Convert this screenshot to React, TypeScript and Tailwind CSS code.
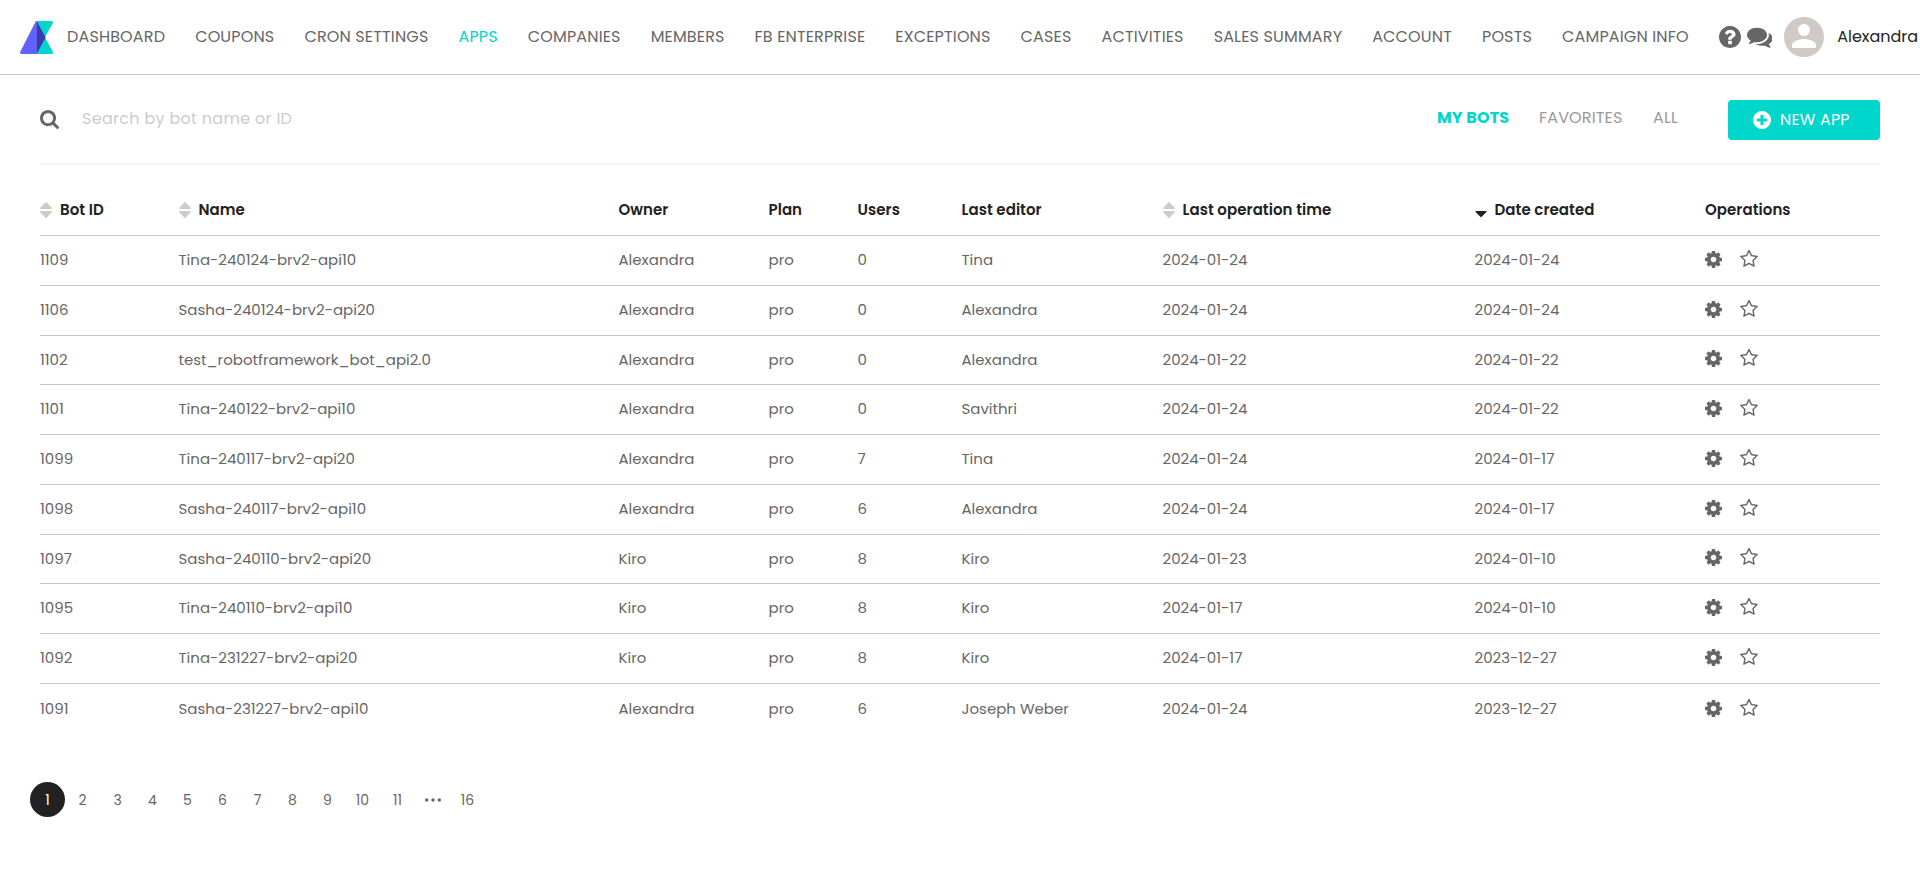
import type { ReactNode } from "react";

const GEAR =
  "M1024 896q0-106-75-181t-181-75-181 75-75 181 75 181 181 75 181-75 75-181zm512-109v222q0 12-8 23t-20 13l-185 28q-19 54-39 91 35 50 107 138 10 12 10 25t-9 23q-27 37-99 108t-94 71q-12 0-26-9l-138-108q-44 23-91 38-16 136-29 186-7 28-36 28h-222q-14 0-24.5-8.5t-11.5-21.5l-28-184q-49-16-90-37l-141 107q-10 9-25 9-14 0-25-11-126-114-165-168-7-10-7-23 0-12 8-23 15-21 51-66.5t54-70.5q-27-50-41-99l-183-27q-13-2-21-12.5t-8-23.5v-222q0-12 8-23t19-13l186-28q14-46 39-92-40-57-107-138-10-12-10-24 0-10 9-23 26-36 98.5-107.500t94.500-71.500q13 0 26 10l138 107q44-23 91-38 16-136 29-186 7-28 36-28h222q14 0 24.500 8.500t11.500 21.500l28 184q49 16 90 37l142-107q9-9 24-9 13 0 25 10 129 119 165 170 7 8 7 22 0 12-8 23-15 21-51 66.500t-54 70.500q26 50 41 98l183 28q13 2 21 12.500t8 23.500z";
const STAR =
  "M1201 1004l306-297-422-62-189-382-189 382-422 62 306 297-73 421 378-199 377 199zm527-357q0 22-26 48l-363 354 86 500q1 7 1 20 0 50-41 50-19 0-40-12l-449-236-449 236q-22 12-40 12-21 0-31.500-14.500t-10.500-35.500q0-6 2-20l86-500-364-354q-25-27-25-48 0-37 56-46l502-73 225-455q19-41 49-41t49 41l225 455 502 73q56 9 56 46z";
const SEARCH =
  "M1216 832q0-185-131.500-316.500t-316.500-131.500-316.500 131.500-131.500 316.500 131.500 316.500 316.500 131.500 316.500-131.500 131.500-316.500zm512 832q0 52-38 90t-90 38q-54 0-90-38l-343-342q-179 124-399 124-143 0-273.500-55.500t-225-150-150-225-55.500-273.500 55.500-273.500 150-225 225-150 273.500-55.500 273.500 55.500 225 150 150 225 55.500 273.500q0 220-124 399l343 343q37 37 37 90z";
const DISC =
  "q0 209-103 385.500t-279.500 279.500-385.500 103-385.500-103-279.500-279.500-103-385.500 103-385.500 279.500-279.500 385.500-103 385.500 103 279.500 279.500 103 385.500z";
const PLUS =
  "M1344 960v-128q0-26-19-45t-45-19h-256v-256q0-26-19-45t-45-19h-128q-26 0-45 19t-19 45v256h-256q-26 0-45 19t-19 45v128q0 26 19 45t45 19h256v256q0 26 19 45t45 19h128q26 0 45-19t19-45v-256h256q26 0 45-19t19-45zm320-64" + DISC;
const QUESTION =
  "M1024 1376v-192q0-14-9-23t-23-9h-192q-14 0-23 9t-9 23v192q0 14 9 23t23 9h192q14 0 23-9t9-23zm256-672q0-88-55.500-163t-138.500-116-170-41q-243 0-371 213-15 24 8 42l132 100q7 6 19 6 16 0 25-12 53-68 86-92 34-24 86-24 48 0 85.500 26t37.500 59q0 38-20 61t-68 45q-63 28-115.500 86.500t-52.500 125.500v36q0 14 9 23t23 9h192q14 0 23-9t9-23q0-19 21.500-49.500t54.500-49.500q32-18 49-28.500t46-35 44.500-48 28-60.500 12.500-81zm384 192" + DISC;
const COMMENTS =
  "M1408 768q0 139-94 257t-256.500 186.500-353.500 68.500q-86 0-176-16-124 88-278 128-36 9-86 16h-3q-11 0-20.500-8t-11.500-21q-1-3-1-6.500t.5-6.500 2-6l2.500-5 3.500-5.500 4-5 4.500-5 4-4.500q5-6 23-25t26-29.500 22.500-29 25-38.500 20.500-44q-124-72-195-177t-71-224q0-139 94-257t256.500-186.500 353.500-68.500 353.500 68.500 256.500 186.500 94 257zm384 256q0 120-71 224.500t-195 176.500q10 24 20.500 44t25 38.500 22.500 29 26 29.500 23 25q1 1 4 4.500t4.500 5 4 5 3.500 5.500l2.500 5 2 6 .5 6.500-1 6.500q-3 14-13 22t-22 7q-50-7-86-16-154-40-278-128-90 16-176 16-271 0-472-132 58 4 88 4 161 0 309-45t264-129q125-92 192-212t67-254q0-77-23-152 129 71 204 178t75 230z";

function Icon({ d, className, viewBox = "0 0 1792 1792" }: { d: string; className: string; viewBox?: string }) {
  return (
    <svg viewBox={viewBox} fill="currentColor" className={`shrink-0 ${className}`} aria-hidden="true">
      <path d={d} />
    </svg>
  );
}

function Logo() {
  return (
    <svg viewBox="0 0 33 33" className="h-[33px] w-[33px] shrink-0" aria-hidden="true">
      <path d="M16.500 0H31.200Q33.800 0 32.700 2.200L25 16.200L32.700 30.600Q33.800 33 31.200 33H16.500z" fill="#00d6cc" />
      <path d="M16.800 0V33H2Q-.8 33 .4 30.400L15.300 1.200Q15.900 0 16.800 0z" fill="#6260ff" />
      <path d="M16.700 0L25.600 16.300L16.700 33z" fill="#3e38b0" />
    </svg>
  );
}

const NAV = [
  "DASHBOARD",
  "COUPONS",
  "CRON SETTINGS",
  "APPS",
  "COMPANIES",
  "MEMBERS",
  "FB ENTERPRISE",
  "EXCEPTIONS",
  "CASES",
  "ACTIVITIES",
  "SALES SUMMARY",
  "ACCOUNT",
  "POSTS",
  "CAMPAIGN INFO",
];

type Bot = { id: string; name: string; owner: string; users: number; editor: string; operated: string; created: string };

const BOTS: Bot[] = [
  { id: "1109", name: "Tina-240124-brv2-api10", owner: "Alexandra", users: 0, editor: "Tina", operated: "2024-01-24", created: "2024-01-24" },
  { id: "1106", name: "Sasha-240124-brv2-api20", owner: "Alexandra", users: 0, editor: "Alexandra", operated: "2024-01-24", created: "2024-01-24" },
  { id: "1102", name: "test_robotframework_bot_api2.0", owner: "Alexandra", users: 0, editor: "Alexandra", operated: "2024-01-22", created: "2024-01-22" },
  { id: "1101", name: "Tina-240122-brv2-api10", owner: "Alexandra", users: 0, editor: "Savithri", operated: "2024-01-24", created: "2024-01-22" },
  { id: "1099", name: "Tina-240117-brv2-api20", owner: "Alexandra", users: 7, editor: "Tina", operated: "2024-01-24", created: "2024-01-17" },
  { id: "1098", name: "Sasha-240117-brv2-api10", owner: "Alexandra", users: 6, editor: "Alexandra", operated: "2024-01-24", created: "2024-01-17" },
  { id: "1097", name: "Sasha-240110-brv2-api20", owner: "Kiro", users: 8, editor: "Kiro", operated: "2024-01-23", created: "2024-01-10" },
  { id: "1095", name: "Tina-240110-brv2-api10", owner: "Kiro", users: 8, editor: "Kiro", operated: "2024-01-17", created: "2024-01-10" },
  { id: "1092", name: "Tina-231227-brv2-api20", owner: "Kiro", users: 8, editor: "Kiro", operated: "2024-01-17", created: "2023-12-27" },
  { id: "1091", name: "Sasha-231227-brv2-api10", owner: "Alexandra", users: 6, editor: "Joseph Weber", operated: "2024-01-24", created: "2023-12-27" },
];

const COLUMNS = "grid grid-cols-[138.5px_440px_150px_89px_104px_201px_312px_230.5px_1fr] items-center border-[#cdc8c4]";

function SortIcon({ active = false }: { active?: boolean }) {
  return (
    <svg viewBox="0 0 12 16" className="h-4 w-3 shrink-0" aria-hidden="true">
      {!active && <path d="M5.300 .4Q6 -.2 6.700 .4L11.700 5.800Q12.200 6.800 11.200 7H.8Q-.2 6.800 .3 5.800z" fill="#d0c9c4" />}
      {active ? (
        <path d="M.8 9H11.200Q12 9.200 11.400 10L6.700 14.800Q6 15.500 5.300 14.800L.6 10Q0 9.200 .8 9z" fill="#222" />
      ) : (
        <path d="M5.300 15.600Q6 16.200 6.700 15.600L11.700 10.200Q12.200 9.200 11.200 9H.8Q-.2 9.200 .3 10.200z" fill="#d0c9c4" />
      )}
    </svg>
  );
}

function Heading({ children, sort }: { children: ReactNode; sort?: "none" | "desc" }) {
  return (
    <div className="flex items-center gap-2">
      {sort && <SortIcon active={sort === "desc"} />}
      <span className="whitespace-nowrap">{children}</span>
    </div>
  );
}

const PAGES = ["1", "2", "3", "4", "5", "6", "7", "8", "9", "10", "11", "…", "16"];

export default function App() {
  return (
    <div className="min-h-screen w-full overflow-hidden bg-white font-['Poppins','Inter',sans-serif] text-[#666] [font-feature-settings:'cv11']">
      <header className="flex h-[75px] items-center overflow-hidden border-b border-[#cdc8c4] pl-5">
        <Logo />
        <nav className="ml-[14px] flex shrink-0 gap-[30px] text-base tracking-[0.15px] whitespace-nowrap">
          {NAV.map((label) => (
            <a key={label} className={`shrink-0 ${label === "APPS" ? "text-[#00d6cc]" : ""}`}>
              {label}
            </a>
          ))}
        </nav>
        <div className="ml-[30.5px] flex shrink-0 items-center pb-px">
          <Icon d={QUESTION} viewBox="128 128 1536 1536" className="h-[22px] w-[22px]" />
          <Icon d={COMMENTS} className="ml-[5.5px] h-[25.5px] w-[25.5px]" />
          <div className="mt-px ml-3 flex h-10 w-10 items-center justify-center rounded-full bg-[#d0c9c4] pb-0.5 text-white">
            <Icon
              viewBox="0 0 24 24"
              d="M12 12c2.210 0 4-1.790 4-4s-1.790-4-4-4-4 1.790-4 4 1.790 4 4 4zm0 2c-2.670 0-8 1.340-8 4v2h16v-2c0-2.660-5.330-4-8-4z"
              className="h-9 w-9"
            />
          </div>
          <span className="ml-[13px] text-base text-[#222]">Alexandra</span>
        </div>
      </header>

      <main className="mx-10">
        <section className="flex h-[90px] items-start border-b-2 border-[#f5f5f5] pt-[25px]">
          <div className="flex h-10 flex-1 items-center">
            <Icon d={SEARCH} viewBox="64 128 1664 1664" className="-mt-px h-[19px] w-[19px]" />
            <input
              className="ml-[23px] w-96 bg-transparent pb-0.5 text-base tracking-[0.3px] outline-none placeholder:text-[#ccc]"
              placeholder="Search by bot name or ID"
            />
          </div>
          <div className="flex h-[35px] items-center text-base tracking-[0.15px] text-[#999]">
            <span className="w-[102px] font-bold text-[#00d6cc]">MY BOTS</span>
            <span className="w-[114px]">FAVORITES</span>
            <span className="w-[75px]">ALL</span>
          </div>
          <button className="flex h-10 w-[152px] items-center rounded bg-[#00d6cc] pl-[25px] text-base tracking-[0.15px] text-white">
            <Icon d={PLUS} viewBox="128 128 1536 1536" className="h-[18px] w-[18px]" />
            <span className="ml-[9px] pb-px">NEW APP</span>
          </button>
        </section>

        <section className="pt-5 text-[15px] whitespace-nowrap">
          <div className={`${COLUMNS} h-[51px] border-b font-semibold tracking-[0.05px] text-[#222]`}>
            <Heading sort="none">Bot ID</Heading>
            <Heading sort="none">Name</Heading>
            <Heading>Owner</Heading>
            <Heading>Plan</Heading>
            <Heading>Users</Heading>
            <Heading>Last editor</Heading>
            <Heading sort="none">Last operation time</Heading>
            <Heading sort="desc">Date created</Heading>
            <Heading>Operations</Heading>
          </div>
          {BOTS.map((bot) => (
            <div key={bot.id} className={`${COLUMNS} h-[49.75px] border-b last:h-[51.25px] last:border-b-0`}>
              <span>{bot.id}</span>
              <span>{bot.name}</span>
              <span>{bot.owner}</span>
              <span>pro</span>
              <span>{bot.users}</span>
              <span>{bot.editor}</span>
              <span>{bot.operated}</span>
              <span>{bot.created}</span>
              <div className="flex items-center gap-[18px] pb-[3px]">
                <Icon d={GEAR} viewBox="0 128 1536 1536" className="mt-px h-[17px] w-[17px]" />
                <Icon d={STAR} viewBox="64 64 1664 1664" className="h-[18px] w-[18px]" />
              </div>
            </div>
          ))}
        </section>

        <nav className="mt-[47px] -ml-[10px] flex text-sm">
          {PAGES.map((page) => (
            <a
              key={page}
              className={`flex h-[35px] w-[35px] items-center justify-center rounded-full ${page === "1" ? "bg-[#222] text-white" : ""}`}
            >
              {page === "…" ? <Icon viewBox="0 0 16 4" d="M0 2a1.700 1.700 0 1 0 3.400 0a1.700 1.700 0 1 0-3.400 0M6.300 2a1.700 1.700 0 1 0 3.400 0a1.700 1.700 0 1 0-3.400 0M12.600 2a1.700 1.700 0 1 0 3.400 0a1.700 1.700 0 1 0-3.400 0" className="h-1 w-4" /> : page}
            </a>
          ))}
        </nav>
      </main>
    </div>
  );
}
